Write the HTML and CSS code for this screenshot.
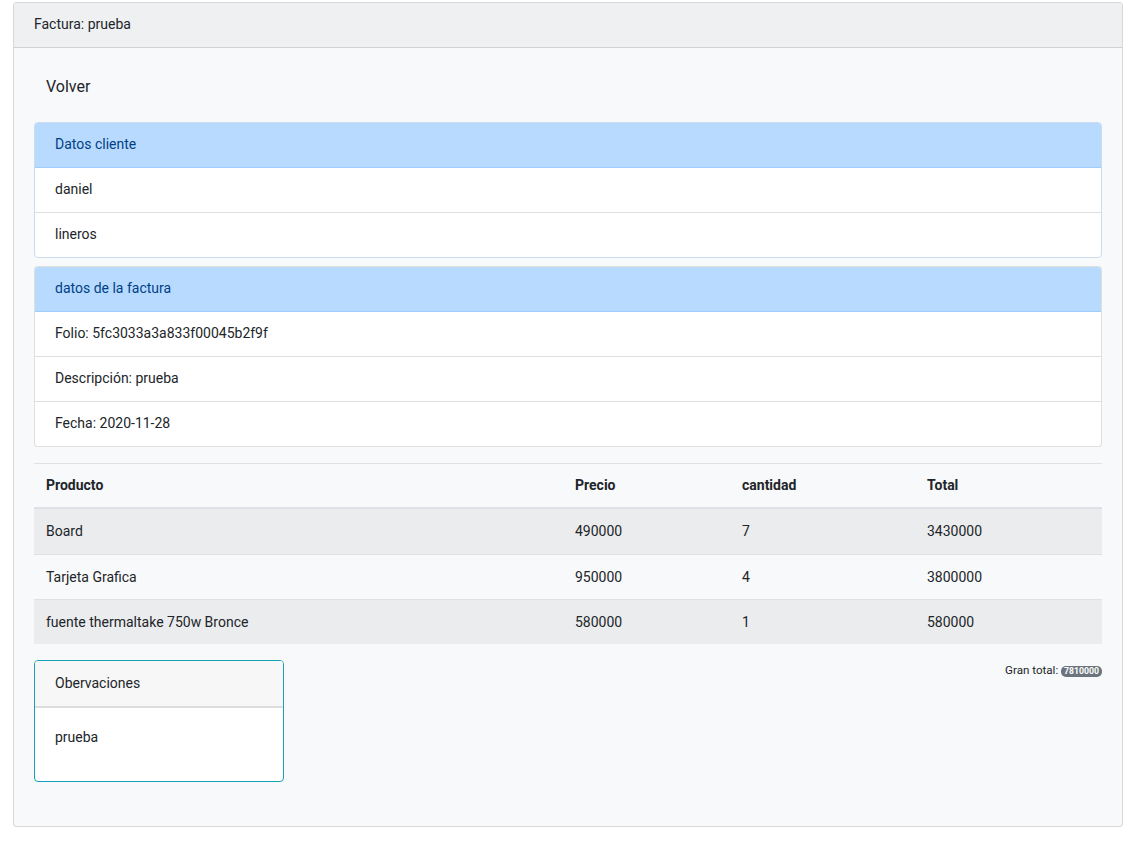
FILE: index.html
```html
<!DOCTYPE html>
<html lang="es">
<head>
<meta charset="utf-8">
<title>Factura</title>
<link rel="stylesheet" href="styles.css">
</head>
<body>
<div class="page">
  <div class="card main">
    <div class="card-header main-header">Factura: prueba</div>
    <div class="card-body main-body">
      <div><a class="btn-volver">Volver</a></div>

      <div class="card info">
        <div class="info-header">Datos cliente</div>
        <ul class="list">
          <li>daniel</li>
          <li>lineros</li>
        </ul>
      </div>

      <div class="card info">
        <div class="info-header">datos de la factura</div>
        <ul class="list">
          <li>Folio: 5fc3033a3a833f00045b2f9f</li>
          <li>Descripción: prueba</li>
          <li>Fecha: 2020-11-28</li>
        </ul>
      </div>

      <table class="table">
        <thead>
          <tr><th class="c1">Producto</th><th class="c2">Precio</th><th class="c3">cantidad</th><th class="c4">Total</th></tr>
        </thead>
        <tbody>
          <tr><td>Board</td><td>490000</td><td>7</td><td>3430000</td></tr>
          <tr><td>Tarjeta Grafica</td><td>950000</td><td>4</td><td>3800000</td></tr>
          <tr><td>fuente thermaltake 750w Bronce</td><td>580000</td><td>1</td><td>580000</td></tr>
        </tbody>
      </table>

      <div class="bottom">
        <div class="card obs">
          <div class="obs-header">Obervaciones</div>
          <div class="obs-body"><p>prueba</p></div>
        </div>
        <div class="total">Gran total: <span class="badge">7810000</span></div>
      </div>
    </div>
  </div>
</div>
</body>
</html>
```
FILE: styles.css
```css
* { box-sizing: border-box; }
html, body { margin: 0; padding: 0; background: #fff; }
body {
  font-family: Roboto, "Liberation Sans", Arial, sans-serif;
  font-size: 14px;
  line-height: 21px;
  color: #212529;
}
.page { padding: 2px 7px 0 13px; }
.card {
  border: 1px solid rgba(0,0,0,.125);
  border-radius: 4px;
  overflow: hidden;
}
.main { width: 1110px; background: #f8f9fa; }
.main-header {
  background: #eff0f2;
  padding: 11px 20px;
  border-bottom: 1px solid rgba(0,0,0,.125);
  height: 45px;
}
.main-body { padding: 20px 20px 44px 20px; }
.btn-volver {
  display: inline-block;
  font-size: 16px;
  line-height: 24px;
  padding: 7px 12px;
  color: #212529;
  margin-bottom: 16px;
}
.info {
  background: #fff;
  border-color: #c9ddf1;
  margin-bottom: 8px;
}
.info + .info { border-color: rgba(0,0,0,.125); margin-bottom: 16px; }
.info-header {
  background: #b8daff;
  color: #004085;
  padding: 11px 20px;
  height: 45px;
  border-bottom: 1px solid #9fcdff;
}
.list { list-style: none; margin: 0; padding: 0; }
.list li {
  padding: 11px 20px;
  height: 45px;
  border-top: 1px solid rgba(0,0,0,.125);
}
.list li:first-child { border-top: 0; height: 44px; padding-top: 11px; }
.table {
  width: 1068px;
  border-collapse: collapse;
  margin-bottom: 16px;
}
.table th, .table td {
  text-align: left;
  vertical-align: top;
  border-top: 1px solid #dee2e6;
}
.table th { font-weight: 700; border-bottom: 2px solid #dee2e6; padding: 11px 12px; }
.table td { padding: 11.5px 12px; }
.table tbody tr:first-child td { padding-top: 12px; padding-bottom: 12px; }
.table tbody tr:nth-child(odd) { background: #ebecee; }
.c1 { width: 529px; }
.c2 { width: 167px; }
.c3 { width: 185px; }
.c4 { width: 187px; }
.bottom {
  display: flex;
  justify-content: space-between;
  align-items: flex-start;
}
.obs {
  width: 250px;
  height: 122px;
  border-color: #17a2b8;
  background: #fff;
}
.obs-header {
  background: #f7f7f7;
  padding: 12px 20px 10px 20px;
  height: 47px;
  border-bottom: 2px solid #dcdcdc;
}
.obs-body { padding: 19px 20px 12px 20px; }
.obs-body p { margin: 0; }
.total {
  font-size: 11.6px;
  line-height: 18px;
  margin-top: 1px;
}
.badge {
  display: inline-block;
  background: #6c757d;
  color: #fff;
  font-size: 8.7px;
  font-weight: 700;
  line-height: 11px;
  padding: 0 3px;
  border-radius: 5px;
  vertical-align: 0px;
}
```
